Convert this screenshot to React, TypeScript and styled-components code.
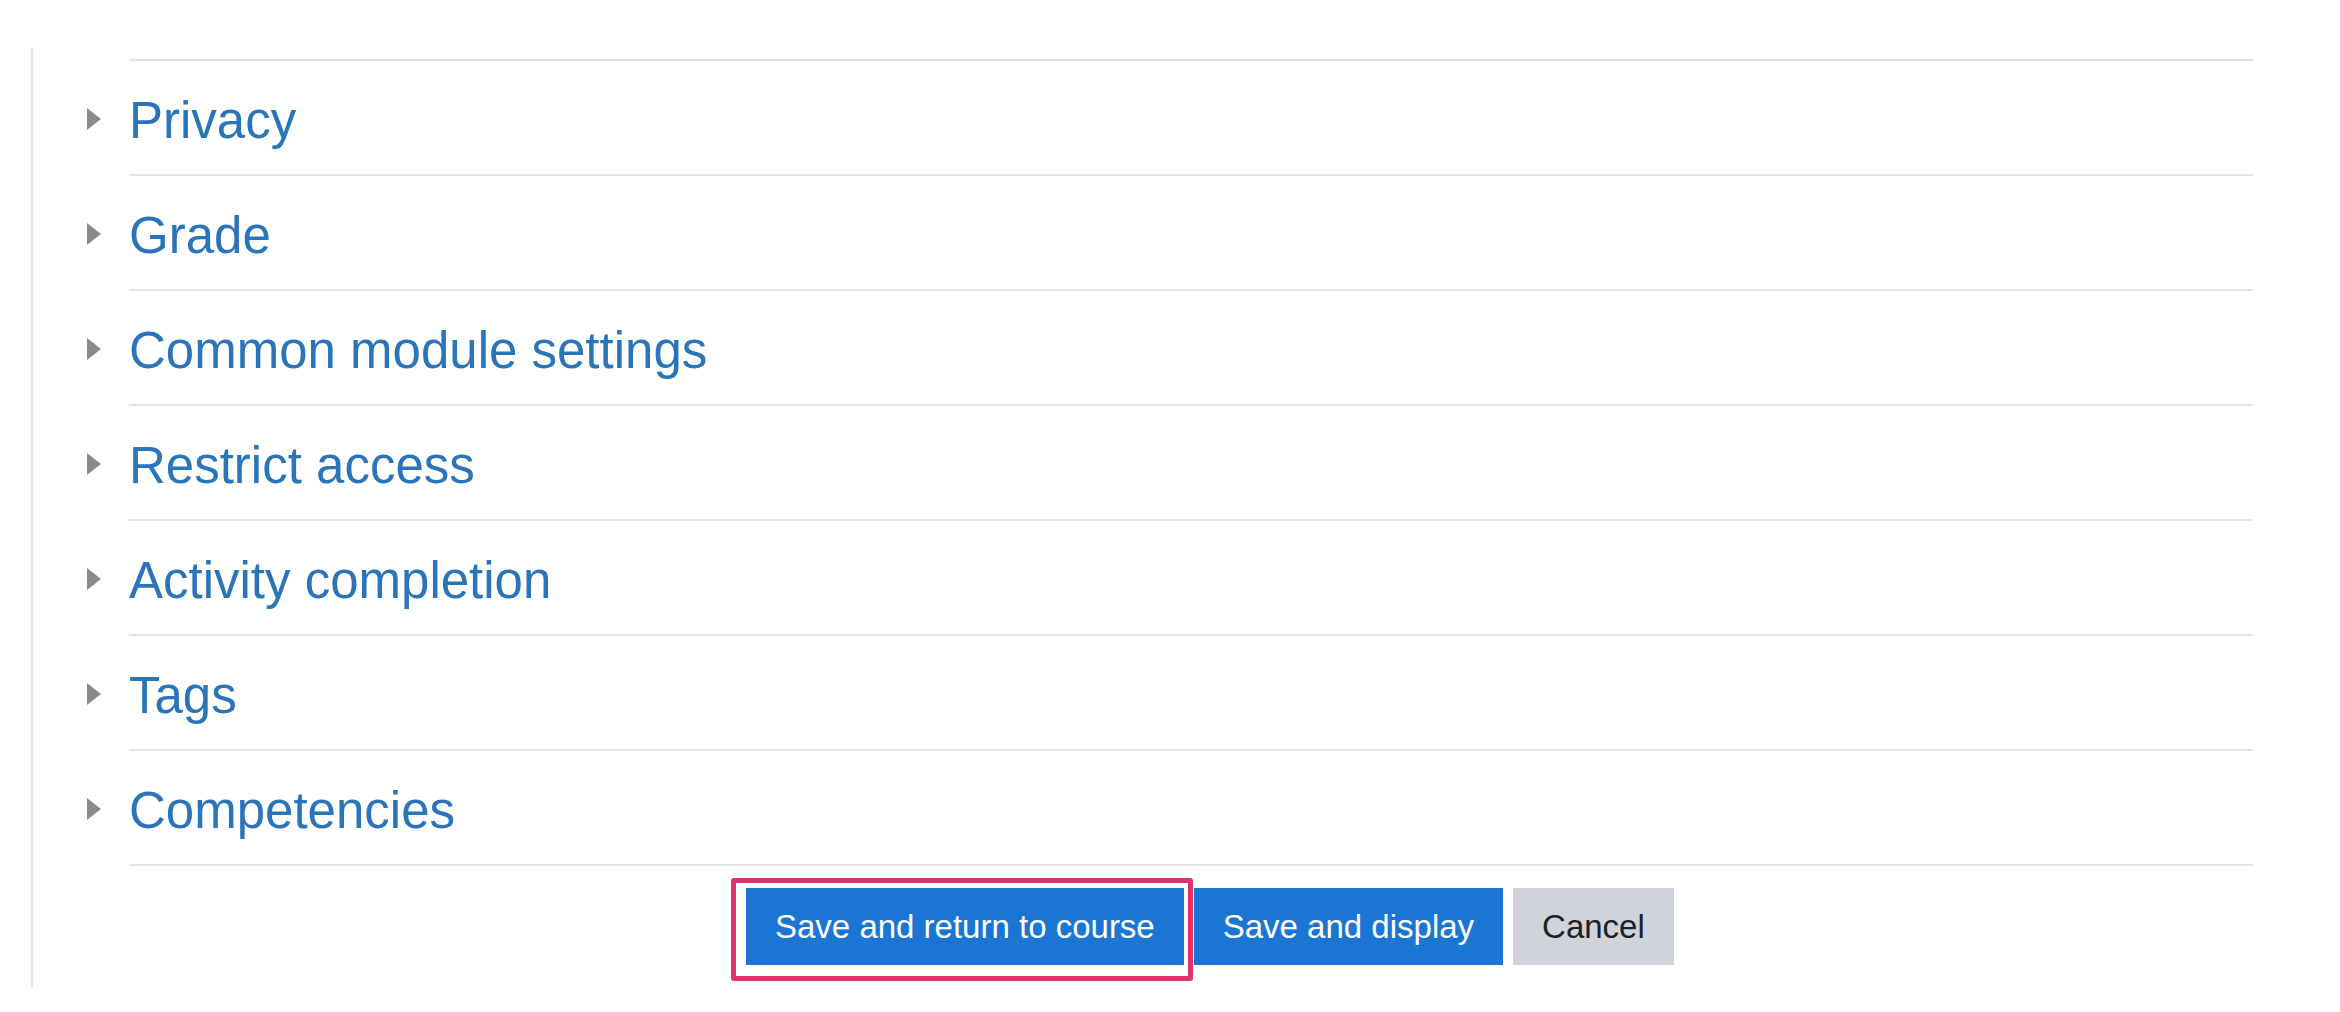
import styled, { createGlobalStyle } from "styled-components";

const GlobalStyle = createGlobalStyle`
  html, body {
    margin: 0;
    padding: 0;
    background: #fff;
  }
  body {
    font-family: "Liberation Sans", Arial, Helvetica, sans-serif;
  }
`;

const Page = styled.div`
  width: 2340px;
  height: 1012px;
  padding: 48px 87px 0 31px;
  box-sizing: border-box;
  overflow: hidden;
`;

const Frame = styled.div`
  border-left: 2px solid #e6e6e6;
  height: 939px;
  padding-top: 11px;
  box-sizing: border-box;
`;

const SectionList = styled.div`
  display: flex;
  flex-direction: column;
`;

const TopRule = styled.div`
  margin-left: 96px;
  border-top: 2px solid #e3e3e3;
`;

const Section = styled.div`
  display: grid;
  grid-template-columns: 42px 1fr;
  padding-left: 54px;
`;

const Toggle = styled.div`
  display: flex;
  align-items: center;
`;

const Header = styled.div`
  height: 115px;
  display: flex;
  align-items: center;
  padding-top: 5px;
  box-sizing: border-box;
  border-bottom: 2px solid #e3e3e3;
`;

const Title = styled.a`
  color: #2a74ba;
  font-size: 51px;
  line-height: 1;
  text-decoration: none;
  cursor: pointer;
`;

const ButtonRow = styled.div`
  display: flex;
  gap: 10px;
  margin: 22px 0 0 713px;
`;

const Highlight = styled.div`
  position: relative;
  display: flex;

  &::after {
    content: "";
    position: absolute;
    top: -10px;
    left: -15px;
    right: -9px;
    bottom: -16px;
    border: 5px solid #e1336b;
    border-radius: 3px;
    pointer-events: none;
  }
`;

const Button = styled.button<{ $variant: "primary" | "secondary" }>`
  height: 77px;
  padding: 0 29px;
  border: none;
  border-radius: 0;
  font-family: inherit;
  font-size: 33px;
  cursor: pointer;
  background: ${(p) => (p.$variant === "primary" ? "#1a76d2" : "#ced4da")};
  color: ${(p) => (p.$variant === "primary" ? "#ffffff" : "#1d2125")};
`;

const Caret = () => (
  <svg width="14" height="22" viewBox="0 0 14 22">
    <polygon points="0,0 14,11 0,22" fill="#8a8a8a" />
  </svg>
);

const sections = [
  "Privacy",
  "Grade",
  "Common module settings",
  "Restrict access",
  "Activity completion",
  "Tags",
  "Competencies",
];

export default function App() {
  return (
    <>
      <GlobalStyle />
      <Page>
        <Frame>
          <SectionList>
            <TopRule />
            {sections.map((name) => (
              <Section key={name}>
                <Toggle>
                  <Caret />
                </Toggle>
                <Header>
                  <Title>{name}</Title>
                </Header>
              </Section>
            ))}
          </SectionList>
          <ButtonRow>
            <Highlight>
              <Button $variant="primary">Save and return to course</Button>
            </Highlight>
            <Button $variant="primary">Save and display</Button>
            <Button $variant="secondary">Cancel</Button>
          </ButtonRow>
        </Frame>
      </Page>
    </>
  );
}
